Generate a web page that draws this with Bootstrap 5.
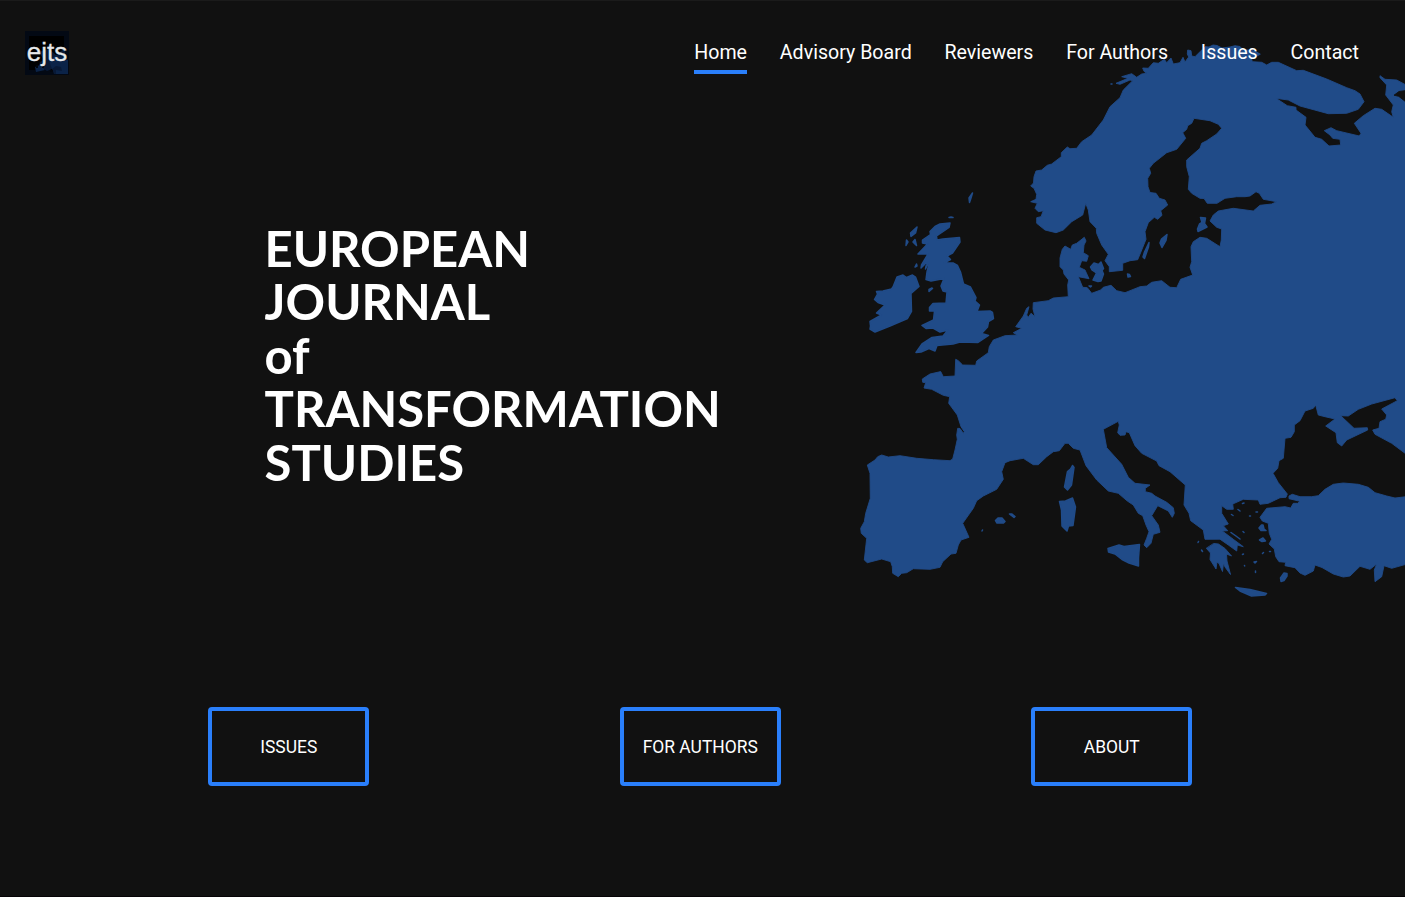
<!DOCTYPE html>
<html lang="en">
<head>
<meta charset="utf-8">
<meta name="viewport" content="width=device-width, initial-scale=1">
<title>European Journal of Transformation Studies</title>
<link href="https://cdn.jsdelivr.net/npm/bootstrap@5.3.0/dist/css/bootstrap.min.css" rel="stylesheet">
<style>
  :root { --accent: #2a7ffb; --land: #204b88; --page: #111111; }
  body { background: var(--page); color: #fff; font-family: Roboto, sans-serif; overflow: hidden; }
  .page { height: 897px; border-top: 1px solid #1b1b1b; border-bottom: 1px solid #060306; }
  .europe { width: 550px; height: 570px; top: 34px; z-index: 0; pointer-events: none; }
  .europe path { fill: var(--land); stroke: var(--land); stroke-width: .9; stroke-linejoin: round; stroke-linecap: round; }
  .europe .isles { stroke-width: 1.5; }
  .europe .sea { fill: var(--page); stroke: var(--page); }
  .site-nav { z-index: 2; padding: 30px 46px 0 25px; height: 90px; }
  .brand-mark { width: 44px; height: 44px; }
  .brand-mark text { font: 26px "Liberation Sans", sans-serif; fill: #e6e8ea; stroke: #e6e8ea; stroke-width: .3; }
  .menu { gap: 32.8px; padding-top: 6px; }
  .menu .nav-link { color: #fff; font-size: 19.6px; line-height: 31px; padding: 0; height: 37px; border-bottom: 4px solid transparent; white-space: nowrap; }
  .menu .nav-link.active { border-color: var(--accent); }
  .hero { z-index: 1; padding: 131px 0 0 264.5px; height: 616px; }
  .hero h1 { font: 700 49px/53.4px Lato, sans-serif; color: #fff; }
  .actions { z-index: 1; width: 1234.5px; margin-left: 83px; }
  .actions .btn { width: 160.6px; height: 79px; border: 4px solid var(--accent); border-radius: 4px; color: #fff; font-size: 17.45px; padding: 1px 0 0; white-space: nowrap; }
  .actions .btn:hover { background: var(--accent); color: #fff; }
</style>
</head>
<body>
<div class="page position-relative">
  <svg class="europe position-absolute end-0" viewBox="855 35 550 570" aria-hidden="true">
    <!-- mainland -->
    <path d="M1260 54L1255 51L1250 50L1243 50L1240 46.5L1235 45.7L1230 47L1222 48L1217 45.5L1213 45L1209 47L1205 46.7L1200 51.7L1195 56.7L1191.7 56L1191 50.7L1187.7 50L1187.3 54L1188.7 57L1185 62L1183 57.3L1180 62.7L1173.3 64L1171 58L1166.7 62.7L1164.3 59.3L1158.3 63.3L1153.3 62.7L1148.3 68.3L1142.7 68L1144 71.3L1146.7 73.3L1141.7 74L1136.7 77.3L1131.7 73.7L1121.7 76.7L1128 78.3L1116 83.3L1120 84.3L1130 80L1132.7 80.7L1123.3 90L1120 97.7L1110 106.7L1103.3 120L1091.7 135L1081.7 141.7L1076.7 148.3L1070 148.7L1067.3 147L1061.3 152.7V156.7L1051.7 164L1047.3 165.3L1041.7 170L1036 171L1034 176.7L1033.5 183L1030.7 186L1034 188.3L1036.7 194.3L1036 199.3L1030.7 201.7L1037.3 203.3L1035 208.3L1038.3 211.7L1043.3 210.7L1041 216.7L1036.7 217.7V223.3L1045 230L1056 232.7L1063.3 230L1071.7 221.7L1082.7 215L1085.7 203.3L1088.3 210L1090 221.7L1096.3 228.3L1096.7 233.3L1101.7 245L1108.3 254.3L1105 260.7L1109.3 266.7V271.7L1122.7 270.3V263.3L1130 260.7L1137.7 259.7L1141.7 250L1146 239.3L1145 231.7L1148.3 222.7L1154.3 217.3L1157.7 219.3L1162 215.3L1160.7 210.7L1167.7 205L1165 200L1159.3 198.3L1156 193.3L1150 192.5L1148 186.7L1147.7 178.3L1150.7 173.3L1149.3 168.3L1153.3 163.3L1166.7 152.7L1176.7 149.3L1185.7 138.3L1182.7 132.7L1186.7 129.3L1187.7 125.7L1191.7 123.3L1194 118.3L1210 120.7L1218.3 124.3L1221.7 128.3L1216.7 134L1206.7 140.7L1201.7 143.3L1200 148.3L1186.7 160V166.7L1189.3 176.7L1188.3 189.3L1191.7 193.3L1200 198.3L1204 198.5L1207.3 203.3H1217L1225 198.3L1236.7 196.7L1245 196.7L1250 196L1256 191.7L1259.3 193.3L1263.3 199.3L1276.7 201.7L1271.7 204L1260 205.3L1253.3 211L1233.3 208.3L1218.3 211L1213.3 215L1210 221L1216.7 227.3L1221.7 229L1221.3 240L1220 246.7L1206.7 238.3L1200 237.3L1193.3 241.7L1191 246.7L1191.7 261.7L1190 267.3L1192.7 275L1180.7 279.3L1176.7 287.7L1170 287.3L1161.7 280.7L1151.7 282.3L1146.7 286L1140 286.7L1125 292.7L1116.7 290.7L1111 285.3L1103.3 287.3L1100.7 290L1091.7 293.3L1087.3 287.7L1082.7 287.3L1078.3 276.7L1089 278.7L1085 270L1079.3 267.3L1081.7 260.7L1086.7 261.3L1088.3 255.7L1083.3 252.7L1084 245L1086 241L1084.3 237.3L1076.7 243.3L1072.3 245L1070.7 249.3L1065 246L1062.3 249.3L1060 258V266.7L1063.3 270L1064 274L1068.7 280L1067.7 285L1068.3 296.7L1053.3 298L1048.3 300.7L1033.3 302.7L1033 309L1035 316.7L1031 313.3L1028.3 317.3L1026.7 315L1029 306.7L1026.7 308.3L1023.3 316L1015.7 326.7L1021.7 328.3L1013.3 332.7L1017.3 335L1005 335.7L993.3 340L989.3 346.7L988.3 352.7L976.7 361L975.7 365.3L962.7 365L958.3 360.7L955.7 359.3L955 376L943.3 376.7L940.7 371.6L930 374L922.3 379L922.7 382.3L925.7 382.7L924 388L931.7 389.3L943.3 395.3L949.7 396.7L948.7 403.3L957.3 415L961 426.7L964.3 431.7L963.3 433.3L960 428.5L957.7 428.3L956.7 435L957.3 439.3L955 450L952.7 459L950 460.7L933.3 459.7L916.7 458.3L900 455.7L888.3 457L881.7 455L877.7 456.7L875 460L867.3 465L870 473.3L870.3 498.3L865.7 513.3L864.3 521.7L860.7 528.3L861.3 533.3L866.7 538.3L864.3 560L867.3 562.7L881.7 559L890.7 561.7L892.3 566.7L892.7 573.3L898.3 576.7L901.7 573.3L906.7 572.7L913.3 568.7L930 569.3L940 567.3L942.7 561.7L951 554L956 553.3L958.3 545L961 540L969 537.3L962.7 523.3L973.3 508.3L976.7 500.7L983.3 496L996.7 489.3L1003.3 479.3L1001.7 471.7L1005 462.7L1010 460.7L1023.3 458.3L1033.3 464.7H1038.3L1046.7 456.7L1053.3 451.7L1059.3 450.7L1065 443.3H1068.3L1073.3 448.3L1080 450L1086 465.7L1096.7 480L1108.3 491L1118.3 493.3L1127.3 501L1133.3 505L1138.3 513.3L1142.7 515.7L1146 525L1149 531.7L1146.7 538.3L1144 545L1146.7 547.7L1151 543.3L1153.3 534.3L1160 532.3L1158.3 525L1151.7 515.7L1157.7 505.7L1168.3 511L1172.3 517.3L1174.3 513.3L1173.3 507.7L1166.7 502.3L1155 496L1151.7 493.3L1145.3 491.7V488.3L1150 485L1135 483.3L1128.3 477.3L1121.7 464.3L1106.7 447.7L1103.3 429.3L1118.3 421.3L1119.3 425L1117.7 432.7L1120 435.3L1125 435L1126 431.7L1129.3 432.7L1135 445.7L1141.7 453.3L1156.7 461L1159 465.7L1170 471.7L1185.3 485L1184 505L1189 513.3L1190.7 520.7L1203.3 530L1205 539.3L1220 539.2L1228.3 545L1236.7 551L1237.3 545L1243.3 546.7L1233.3 539.3L1222.3 531L1227.7 530.7L1223.3 525.7L1228.3 524L1221.7 513.3V505.7L1226.7 509.3H1233.3L1232.7 504L1243.3 499.3L1258.3 500L1260 504.3L1268.3 503.3L1280 497.7L1286 497.3L1287.3 494L1278.3 482.7L1273 473.3L1277.7 468.3L1279 460.7L1283.3 458.3L1285 438.3L1291 437.3L1294.3 431.7V425L1300 420.7L1305 411L1313.3 408.3L1315.7 405L1318.3 415L1325 416.7L1335 419L1325.7 426L1336 432.7L1337.3 442.7L1341.7 446L1346.7 440L1367.7 430L1367.3 427.7L1354 428.3L1340.7 415.7L1348.3 416L1358.3 409.3L1371.7 404L1395 397.7L1397.3 400.7L1381.7 409L1386.7 415L1385.7 419.3L1380 421.7L1379 428.3L1372.7 430L1375 434.3L1391.7 443.3L1406 454V85L1396.7 80L1385 79.3L1380 75.7V77.7L1386.7 85L1385.7 95L1393.3 105L1391.7 111.7L1393.3 117.3L1381.7 109.3L1375 108.3L1363.3 115.7L1354.3 123.3L1361 133.3L1359.3 136L1336.7 130.7L1331 127.7L1324.3 130.7L1330 135L1332.7 138.3L1340 139.3L1340.7 145L1329 146L1321.7 139.3L1315 137.3L1305 125L1306 117.3L1296 110V107.3L1287.3 105.7L1276 98.3L1288.3 100L1300 106L1328.3 113.7L1346.7 113.3L1358.3 109.3L1364 101.7L1360 94L1355 90.7L1346.7 87.7L1326.7 79L1303.3 70.3L1296.7 70.7L1278.3 62.3H1271.7L1266.7 65L1261.7 62.3L1252.3 61.7L1251.7 59.3Z"/>
    <path class="sea" d="M1394.3 95L1399 91.5L1406 90.5V102L1399 96.5Z"/>
    <!-- anatolia -->
    <path d="M1406 496.7L1395 498L1386.7 496L1375 492.7L1368.3 487.3L1358.3 484.3L1343.3 483L1333.3 484.3L1325 489.3L1318.3 495.7L1311.7 496.7H1300L1292.3 494.3L1289 496V498.7L1300 501.3L1297.7 503.3H1293.3L1290.7 508L1285 506.7L1266.7 508.3L1260 517.3L1262.3 521L1268.3 523.3L1269.3 533.3L1271.7 539.3L1269 544L1274.3 549L1275.7 556.7L1279 561.7L1285.7 562.3L1285 565.7L1295 567.7L1300 573L1305 575.3L1313.3 571L1315 565L1322 567.5L1333.3 574L1343.3 577L1350 576L1360 566.3L1370 569.3L1376.7 564L1374.3 570L1375 581.7L1381.7 576.7L1384 565.7L1391.7 568.3L1406 564.3Z"/>
    <!-- british isles -->
    <path class="isles" d="M950 223L940 224L935 226.500L930 231.500L930.500 234.500L922.500 240L922.500 243L927.500 244L918 254L928 254L921.500 265L921 268L926 263L929 264L927 272L926 279.500L931 281L944 278.500L941 286L943 291L947 292L946 303L933 303.500L929.500 307.500L929.500 311L934.500 311L933.500 320L922 325.500L926 328.500L933 328L940 332L948 330L943 336L932 337.500L922 344L916 352.500L921 352L929 348.500L935 351L937 345.500L953 344L960 342L978 342.500L988.500 335.500L981.500 333.500L987.500 327L988.500 321.500L993.500 318.500L992.500 312.500L990 311L977 311.500L979.500 305L975 301L976 297.500L970.500 287L963.500 284L960.500 272L957.500 265.500L953 263L944 263L950.500 259.500L947 256L952.500 253L960 242L959.500 237.500L943 239L937 240L936.500 236L949 227.500Z"/>
    <path class="isles" d="M903 275L897 277L893 287L891.5 289L883 291L876.500 291.500L877.500 294L874.500 299.500L878 302.500L885 305L876.500 313L881.500 315L870 321.500L870.500 326L870 329L875 332L890 326L907.500 318.500L911.500 311.500L911 293.500L919 286.500L915.500 277L912.500 275L906.500 277.500Z"/>
    <path class="isles" d="M917 227L910.500 233L911 236.500L915.500 233ZM906.500 240L908 242L906 245.500ZM915 239.500L913 242L916.500 245.500ZM916.500 264L915 267L917 266ZM932 288L929 289.500L929 291.500L932.500 288.500ZM949 217.500L951 217L953 217.500ZM972.500 193L969 198L969.500 202.500L971 198ZM929 262L926 266L925.500 269Z"/>
    <!-- danish islands, gotland, oland, bornholm, estonian islands -->
    <path class="isles" d="M1101 262L1098.500 264.500L1094 263L1090.500 267L1092 270L1096.500 273L1093 280L1098 281.500L1101 281L1103.500 274L1102 270.500L1103.500 268.500ZM1089 286L1091.500 286L1090.500 287ZM1127.500 274L1129.500 274.500L1130.500 276.500L1128 277ZM1149 242.500L1144.500 252L1143 257L1144.500 258.500L1148.500 247ZM1167 234.500L1161.500 239L1160 243L1162 247.500L1166 240.500ZM1200.500 217.500L1205.500 218L1204.500 223.500L1207 227L1198 231.500L1197.500 229L1199.500 224L1202 222.500ZM1111 84L1112 84"/>
    <!-- mediterranean islands -->
    <path class="isles" d="M1072.500 465.500L1074 467.500L1071.500 485L1067.500 490L1064.500 487L1067.500 471.500L1070.500 469ZM1072.500 498L1075.500 507L1073 525.500L1068.500 526L1067 531L1062 526L1061.500 510L1059.500 501.500L1065.500 501ZM1108 548.500L1119 545L1124 546.500L1139.500 544.500L1138.500 558L1138.500 566L1129 563L1122 559.500L1115 554L1108.500 552ZM995.500 520.500L998 518L1002 518L1005 521.500L1003.500 523L997 523ZM1009.500 514L1012 514L1015 516.500L1014 517.500ZM982.500 530L982 531M1235.500 587.500L1250 589.500L1266.500 593.500L1265 595L1251.500 596L1240 591ZM1287 573.500L1284 573L1280.500 578L1281 581.500L1284 580.500L1287 576ZM1198.500 541.500L1198 542.500ZM1201.500 550L1202.500 551.500Z"/>
    <!-- peloponnese -->
    <path d="M1214 543.5L1218.500 544L1225 548.500L1231.500 556L1226.500 554L1227 561L1230.500 574.500L1225 567L1223.500 563L1222.500 571.500L1219 563.500L1217 562L1216 569L1210 559.500L1210.500 553L1206.500 548.500Z"/>
    <!-- aegean islands -->
    <path class="isles" d="M1231 532.500L1236 536L1240 539ZM1261.500 525L1263 525L1264 529L1266 530.500H1261L1259 528ZM1259.500 540L1263 538L1265.500 541L1262 541.500ZM1242.500 503.500L1244 503ZM1238 509.500L1240 511M1249.500 516L1250.500 516M1231.500 514.500L1233 515.500M1256 512L1257.500 512M1243 531.500L1244 532.500M1242.500 554.500L1243.500 554M1254 562L1256.500 561.500L1255 563ZM1255.500 571L1255.500 572.500M1262.500 553.500L1263.500 552.500M1269.500 551.500H1270.500M1244.500 565.500L1244.700 566"/>
  </svg>

  <header class="site-nav position-relative d-flex justify-content-between align-items-start">
    <a href="#" aria-label="ejts home" class="d-block lh-1">
      <svg class="brand-mark d-block" viewBox="0 0 44 44">
        <rect width="44" height="44" fill="#030914"/>
        <rect x="4" y="5" width="35" height="34" fill="#000"/>
        <path d="M14 21L24 18L31 24L40 17V43H29L27 38L22 40L14 35L15 31L19 29Z" fill="#081936"/>
        <path d="M24 30L31 24L43 29V43H31V39L37 40L36 36L31 35L27 38ZM10 36L15 34L20 39L11 41Z" fill="#0b2348"/>
        <path d="M11 34H13V37H11ZM17 35H19V37H17ZM25 39H28V41H25Z" fill="#02060e"/>
        <text x="1.700" y="29.700">ejts</text>
      </svg>
    </a>
    <nav class="menu nav flex-nowrap">
      <a class="nav-link active" aria-current="page" href="#">Home</a>
      <a class="nav-link" href="#">Advisory Board</a>
      <a class="nav-link" href="#">Reviewers</a>
      <a class="nav-link" href="#">For Authors</a>
      <a class="nav-link" href="#">Issues</a>
      <a class="nav-link" href="#">Contact</a>
    </nav>
  </header>

  <section class="hero position-relative">
    <h1 class="m-0">EUROPEAN<br>JOURNAL<br>of<br>TRANSFORMATION<br>STUDIES</h1>
  </section>

  <section class="actions position-relative row g-0 text-center">
    <div class="col-4"><a class="btn d-inline-flex align-items-center justify-content-center" href="#">ISSUES</a></div>
    <div class="col-4"><a class="btn d-inline-flex align-items-center justify-content-center" href="#">FOR AUTHORS</a></div>
    <div class="col-4"><a class="btn d-inline-flex align-items-center justify-content-center" href="#">ABOUT</a></div>
  </section>
</div>
<script src="https://cdn.jsdelivr.net/npm/bootstrap@5.3.0/dist/js/bootstrap.bundle.min.js"></script>
</body>
</html>
